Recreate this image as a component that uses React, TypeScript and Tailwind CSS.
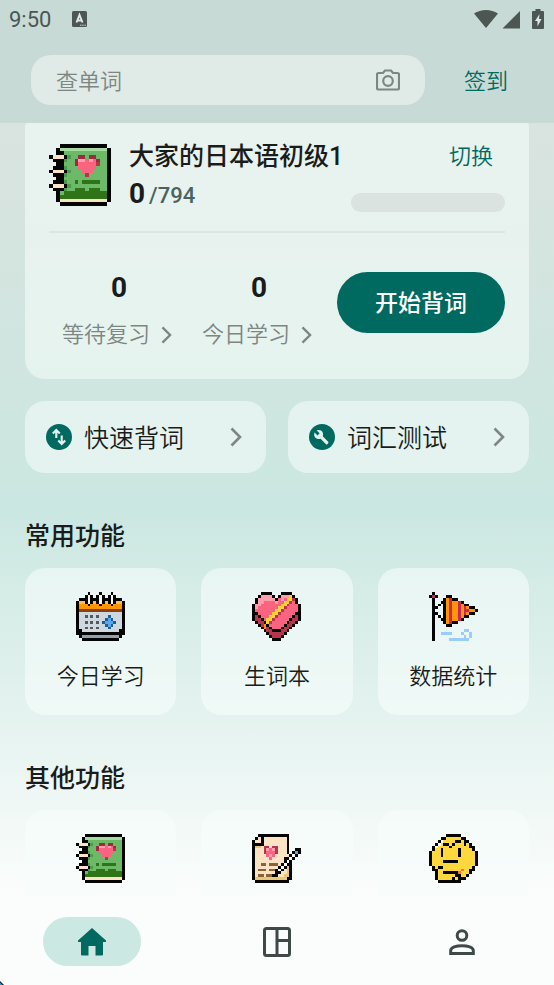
import React from "react";

const PALETTE: Record<string, string> = {
  k: "#050505", w: "#ffffff", g: "#6cba68", l: "#a5dba0", d: "#2f7416", m: "#4a9a48",
  c: "#fce3c4", r: "#9c2a41", p: "#fb6480", P: "#ff9fae", s: "#ced8de", S: "#93a0ac",
  D: "#4e5b60", o: "#ff9500", O: "#ffb95c", b: "#8a4310", B: "#1c5f93", L: "#58a6ee",
  y: "#ffd233", Y: "#ff9800", x: "#b7344e", R: "#c9275a", u: "#99ccff", n: "#8a6434",
  t: "#e8c878", f: "#ffd83d", F: "#ff7043",
};

// 17x17 sprites, one palette key per cell; "." is transparent.
const ART = {
  book: [
    "...kkkkkkkkkkkkk.",
    "..klllllllllllllk",
    "..kkggggggggggggk",
    "kccckmggrrgrrgggk",
    ".kkkmggrPPpPprggk",
    "..kkgggrpppppxggk",
    ".kkkmgggpppppgggk",
    "kccckmgggpppggggk",
    ".kkkmgggggxgggggk",
    "..kkggggggggggggk",
    ".kkkmggdgdddddggk",
    "kccckmggggggggggk",
    ".kkkmggdddgdddggk",
    "..kgddddddddddddk",
    "..kdddddddddddddk",
    "..kccccccccccccck",
    "...kkkkkkkkkkkkk.",
  ],
  calendar: [
    "....k...k...k....",
    "...kwk.kwk.kwk...",
    ".kkkwkkkwkkkwkkk.",
    "kOOkwkOkwkOkwkOOk",
    "koookoookoookoook",
    "koooooooooooooook",
    "kbbbbbbbbbbbbbbbk",
    "ksssssssssssssssk",
    "kssDsDsDsssBssssk",
    "ksssssssssBLBsssk",
    "kssDsDsDsBLLLBssk",
    "ksssssssssBLBsssk",
    "kssDsDsDsssBssssk",
    "kksssssssssssssKk",
    "kkkkkkkkkkkkkkkkk",
    ".kSSSSSSSSSSSSSk.",
    "..kkkkkkkkkkkkk..",
  ],
  heart: [
    "...kkkk...kkkk...",
    "..kPPPPk.kPPPyk..",
    ".kPPPPPPkpPpyyxk.",
    ".kPPppppPppyyxpk.",
    "kPPpppppppyyxpppk",
    "kPpppppppyyxppppk",
    "kpppppppyyxpppppk",
    "kkpppppyyxpppppkk",
    "kxkpppyyxpppppkxk",
    "kxxkpyyxpppppkxxk",
    ".kxxkyxpppppkxxk.",
    "..kxYkpppppkxxk..",
    "...kYxkpppkxxk...",
    "....kxxkkkxxk....",
    ".....kxxxxxk.....",
    "......kxxxk......",
    ".......kkk.......",
  ],
  flag: [
    ".k...............",
    "kRk...kk.........",
    ".k...koRkk.......",
    ".k..kkoRooRk.....",
    ".k.k.koRooRokk...",
    ".kk..koRooRoRokk.",
    ".k...koRooRoRRook",
    ".kk..koRooRoRokk.",
    ".k.k.koRooRokk...",
    ".k..kkoRooRk.....",
    ".k...koRkk.......",
    ".k....kk.........",
    ".k...............",
    ".k..........uu...",
    ".k..uuuu...u..u..",
    ".k..........u.u..",
    ".k.....uuuuuuu...",
  ],
  letter: [
    "..kkkkkkkkkkk....",
    ".kckcccccccck....",
    "kcckcccccccck....",
    "kkkkcccccccck....",
    "kttcxxcxxccck....",
    "kcccxPpPxccck..kk",
    "kcccxpppxccck.kLk",
    "kccccpPpccccckwk.",
    "kcccccpcccckkwk..",
    "kcccccccccckwk...",
    "kccnncnnnckwkk...",
    "kcccccccckwktk...",
    "kcnnncnnkwkctk...",
    "kccccccckkcctk...",
    "kcnncnnkkccttk...",
    "ktttttttttttkk...",
    ".kkkkkkkkkkkk....",
  ],
  think: [
    "......kkkkk......",
    "....kkfffffkk....",
    "...kwffffkkfkk...",
    "..kwfkkfkfffkfk..",
    ".kwffffkffffffkk.",
    ".kffkfffffkffffk.",
    "kfffkfffffkfffffk",
    "kfffkfffffkfffffk",
    "kfffffffffffffffk",
    "kffffkkkkkffffffk",
    "kfffffffffffffffk",
    ".kfkkffffffffffk.",
    ".kkffffffffFffkk.",
    "..kffkkkkkFfffk..",
    "..kffffffkkffk...",
    "..kfffffkfkkk....",
    "...kkkkkkkk......",
  ],
};

type ArtName = keyof typeof ART;

function Pixel({ name, className }: { name: ArtName; className: string }) {
  return (
    <svg viewBox="0 0 17 17" shapeRendering="crispEdges" className={className} aria-hidden="true">
      {ART[name].flatMap((row, y) =>
        row.split("").map((ch, x) =>
          ch === "." ? null : <rect key={`${x}-${y}`} x={x} y={y} width="1" height="1" fill={PALETTE[ch] ?? PALETTE.k} />
        )
      )}
    </svg>
  );
}

function Chevron({ className }: { className: string }) {
  return (
    <svg viewBox="0 0 12 20" className={className} fill="none" stroke="currentColor" strokeWidth="2.600" aria-hidden="true">
      <path d="M1.500 1.500 10 10l-8.500 8.500" />
    </svg>
  );
}

function StatusBar() {
  return (
    <div className="flex h-[37px] items-center pl-[9px] pr-[10px] text-[#4c5653]">
      <span className="pt-0.5 text-[22px] leading-6">9:50</span>
      <svg viewBox="0 0 15 16" className="ml-[21px] h-4 w-[15px]" aria-hidden="true">
        <rect width="15" height="16" rx="1.500" fill="currentColor" />
        <path d="M4.500 11.500 7.500 4 10.500 11.500M5.500 9.500h4" fill="none" stroke="#dce8e5" strokeWidth="2" />
        <path d="M8 14.200h6" stroke="#c8dad6" strokeDasharray="1.500 .7" />
      </svg>
      <svg viewBox="0 0 70 20" className="ml-auto h-5 w-[70px]" fill="currentColor" aria-hidden="true">
        <path d="M0 4.500C7-.2 17-.2 24 4.500L12 19z" />
        <path d="M46 2v17.500H28.500z" />
        <path d="M61.500 0h5v2H69q1 0 1 1v16q0 1-1 1H59q-1 0-1-1V3q0-1 1-1h2.500z" />
        <path d="M65.500 5 61 12h2.500v5.500L67.500 10H65z" fill="#dce8e5" />
      </svg>
    </div>
  );
}

function Header() {
  return (
    <header className="shrink-0 bg-[#c8dad6] pb-[18px]">
      <StatusBar />
      <div className="mt-[18px] flex items-center pl-[31px] pr-[46px]">
        <div className="flex h-[50px] min-w-0 flex-1 items-center rounded-[20px] bg-[#e0eae7] px-[25px]">
          <input
            aria-label="查单词"
            placeholder="查单词"
            className="min-w-0 flex-1 bg-transparent pt-[3px] text-[22px] leading-8 font-[350] outline-none placeholder:text-[#7d8683] placeholder:opacity-100"
          />
          <button aria-label="拍照查词" className="text-[#7d8683]">
            <svg viewBox="0 0 24 22" className="h-[22px] w-6" fill="none" stroke="currentColor" strokeWidth="2.200" aria-hidden="true">
              <path d="M2.500 4H7l2-2.500h6L17 4h4.500Q23 4 23 5.500v13.500q0 1.500-1.500 1.500h-19Q1 20.500 1 19V5.500Q1 4 2.500 4z" />
              <circle cx="12" cy="12" r="4.800" />
            </svg>
          </button>
        </div>
        <button className="ml-[39px] pt-[3px] text-[22px] leading-8 font-[350] text-[#006a60]">签到</button>
      </div>
    </header>
  );
}

function Stat({ label }: { label: string }) {
  return (
    <button className="flex flex-1 flex-col items-center">
      <span className="text-[28px] leading-8 font-bold text-[#191c1b]">0</span>
      <span className="mt-[15px] flex items-center gap-[11px] pr-1 text-[22px] leading-8 font-[350] text-[#7d8683]">
        {label}
        <Chevron className="h-[18px] w-[11px]" />
      </span>
    </button>
  );
}

function WordBook() {
  return (
    <section className="rounded-t-[3px] rounded-b-[20px] bg-[#f4fcf9]/60 px-6 pt-[21px] pb-7">
      <div className="flex gap-[18px] pb-[19px]">
        <Pixel name="book" className="size-[62px] shrink-0" />
        <div className="min-w-0 flex-1">
          <div className="flex items-center justify-between pr-3">
            <h1 className="text-[25px] leading-[26px] font-medium text-[#191c1b]">大家的日本语初级1</h1>
            <button className="text-[22px] leading-[26px] font-[350] text-[#006a60]">切换</button>
          </div>
          <div className="mt-2 flex h-[34px] items-end justify-between">
            <p className="flex items-baseline gap-1 self-start leading-8">
              <span className="text-[28px] font-bold text-[#191c1b]">0</span>
              <span className="text-[22px] font-medium text-[#4a635f]">/794</span>
            </p>
            <div role="progressbar" aria-label="学习进度" aria-valuenow={0} aria-valuemax={794} className="h-[19px] w-[154px] rounded-full bg-[#dae3e0]" />
          </div>
        </div>
      </div>
      <div className="h-[2px] bg-[#dce5e2]" />
      <div className="mt-[39px] flex items-start">
        <div className="flex flex-1">
          <Stat label="等待复习" />
          <Stat label="今日学习" />
        </div>
        <button className="ml-2 h-[61px] w-[168px] rounded-full bg-[#006a60] pt-[3px] text-[23px] font-medium text-white">开始背词</button>
      </div>
    </section>
  );
}

function Shortcut({ label, children }: { label: string; children: React.ReactNode }) {
  return (
    <button className="flex h-[72px] flex-1 items-center rounded-[20px] bg-[#f4fcf9]/60 pl-[21px] pr-6 text-[#191c1b]">
      <svg viewBox="0 0 24 24" className="size-[26px]" aria-hidden="true">
        <circle cx="12" cy="12" r="12" fill="#006a60" />
        {children}
      </svg>
      <span className="ml-3 pt-1 text-[25px] leading-8 font-[350]">{label}</span>
      <Chevron className="ml-auto h-5 w-3 text-[#7d8683]" />
    </button>
  );
}

type Tile = { art: ArtName; name: string; caption?: string };

function Group({ title, tiles }: { title: string; tiles: Tile[] }) {
  return (
    <section className="mt-[47px]">
      <h2 className="text-[25px] leading-[34px] font-medium text-[#191c1b]">{title}</h2>
      <div className="mt-3.5 grid grid-cols-3 gap-[25px]">
        {tiles.map((t) => (
          <button key={t.name} aria-label={t.name} className="flex h-[147px] flex-col items-center rounded-[20px] bg-[#f7fdfb]/60 pt-6">
            <Pixel name={t.art} className="size-[49px]" />
            {t.caption && <span className="mt-5 text-[22px] leading-8 font-[350] text-[#191c1b]">{t.caption}</span>}
          </button>
        ))}
      </div>
    </section>
  );
}

function BottomNav() {
  return (
    <nav className="relative grid h-[88px] shrink-0 grid-cols-3 items-center justify-items-center bg-[#fbfdfc] pt-px text-[#3f4947]">
      <button aria-label="首页" aria-current="page" className="flex h-[49px] w-[98px] items-center justify-center rounded-full bg-[#cce8e2] text-[#006a60]">
        <svg viewBox="0 0 28 28" className="size-7" fill="currentColor" aria-hidden="true">
          <path d="M14 0 28 12.500V14h-3v12.500q0 1-1 1h-6.500V18h-7v9.500H4q-1 0-1-1V14H0v-1.500z" />
        </svg>
      </button>
      <button aria-label="词库">
        <svg viewBox="0 0 28 30" className="h-[30px] w-7" fill="none" stroke="currentColor" strokeWidth="3" aria-hidden="true">
          <rect x="1.500" y="1.500" width="25" height="27" rx="2" />
          <path d="M14 2v26M14 13.500h12" />
        </svg>
      </button>
      <button aria-label="我的">
        <svg viewBox="0 0 26 26" className="size-[26px]" fill="none" stroke="currentColor" strokeWidth="3" aria-hidden="true">
          <circle cx="13" cy="6.500" r="4.800" />
          <path d="M1.700 24.500v-3c0-6.500 22.600-6.500 22.600 0v3z" />
        </svg>
      </button>
      <svg viewBox="0 0 4 4" className="absolute bottom-0 left-0 size-1" aria-hidden="true">
        <path d="M0 0 4 4H0z" fill="#111111" />
        <path d="M0 1.500 2.500 4H0z" fill="#00a4e4" />
      </svg>
    </nav>
  );
}

export default function App() {
  return (
    <div className="flex h-screen flex-col overflow-hidden bg-[#fbfdfc] font-[Roboto,'Noto_Sans_CJK_SC',sans-serif]">
      <Header />
      <main className="min-h-0 flex-1 overflow-hidden bg-linear-to-b from-[#d9e3df] via-[#cbe7e1] via-50% to-[#fbfdfc] px-[25px]">
        <WordBook />
        <div className="mt-[22px] flex gap-[22px]">
          <Shortcut label="快速背词">
            <path d="M9.500 13V6M6.300 8.700l3.200-3.200 3.200 3.200M14.500 10.500v8M11.300 15.300l3.200 3.200 3.200-3.200" fill="none" stroke="#e4f2ee" strokeWidth="2" />
          </Shortcut>
          <Shortcut label="词汇测试">
            <path d="M17.700 16.300 12.700 11.300c.7-1.900.2-3.700-1-4.800-1.300-1.200-3.100-1.300-4.600-.6l2.700 2.700-1.900 1.900-2.700-2.600c-.8 1.500-.5 3.500.7 4.700 1.300 1.300 3.200 1.600 4.800 1l5 5q.6.600 1.200 0l.8-.9q.6-.7 0-1.400z" fill="#e4f2ee" />
          </Shortcut>
        </div>
        <Group
          title="常用功能"
          tiles={[
            { art: "calendar", name: "今日学习", caption: "今日学习" },
            { art: "heart", name: "生词本", caption: "生词本" },
            { art: "flag", name: "数据统计", caption: "数据统计" },
          ]}
        />
        <Group
          title="其他功能"
          tiles={[
            { art: "book", name: "词书" },
            { art: "letter", name: "笔记" },
            { art: "think", name: "反馈" },
          ]}
        />
      </main>
      <BottomNav />
    </div>
  );
}
